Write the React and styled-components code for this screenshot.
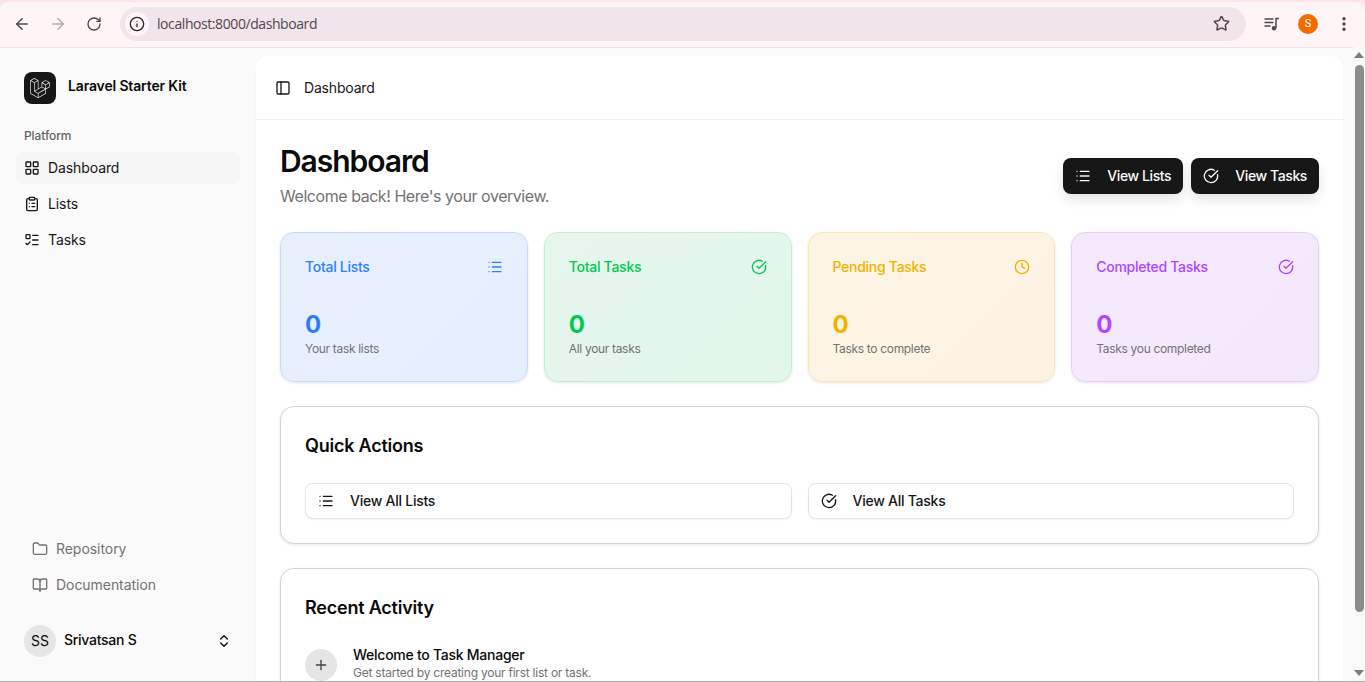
import React from 'react'
import styled, { createGlobalStyle } from 'styled-components'
import {
  ArrowLeft, ArrowRight, RotateCw, Info, Star, MoreVertical,
  LayoutGrid, ClipboardList, ListTodo, List, CircleCheckBig, Clock, Folder,
  BookOpen, ChevronsUpDown, PanelLeft, Plus,
} from 'lucide-react'
import { SiLaravel } from 'react-icons/si'

const tones = {
  blue: { text: '#2b7fff', border: '#c3d9fd', from: '#e8f0fe', to: '#e6effe' },
  green: { text: '#00c951', border: '#bdeecf', from: '#e5f7ed', to: '#e3f6ea' },
  yellow: { text: '#f0b100', border: '#f9e6b5', from: '#fdf5e4', to: '#fcf3e3' },
  purple: { text: '#ad46ff', border: '#e6ccfd', from: '#f5e9fe', to: '#f4e8fd' },
}

const GlobalStyle = createGlobalStyle`
  html, body { margin: 0; padding: 0; overflow: hidden; }
  * { box-sizing: border-box; }
  body { font-family: Inter, "Liberation Sans", sans-serif; color: #0a0a0a; }
`

const Screen = styled.div`
  width: 1365px;
  height: 682px;
  display: flex;
  flex-direction: column;
  overflow: hidden;
  background: #fafafa;
  border-bottom: 1px solid #a9a9a9;
`

const BrowserFrame = styled.div`
  flex: none;
  height: 48px;
  padding-top: 2px;
  background: #ffe3ea;
`

const Toolbar = styled.div`
  height: 46px;
  display: flex;
  align-items: center;
  padding: 0 3px 2px 4px;
  background: #fff5f6;
  border-radius: 8px 8px 0 0;
  border-bottom: 1px solid #f1dfe5;
`

const NavButton = styled.span`
  width: 36px;
  height: 36px;
  display: flex;
  align-items: center;
  justify-content: center;
  color: ${p => (p.$dim ? '#b5a9ae' : '#54454c')};
`

const AddressBar = styled.div`
  flex: 1;
  height: 34px;
  margin-left: 8px;
  padding: 0 16px 0 5px;
  display: flex;
  align-items: center;
  background: #f1e5ec;
  border-radius: 17px;
  color: #54454c;
`

const InfoBadge = styled.span`
  width: 24px;
  height: 24px;
  border-radius: 50%;
  background: #fff5f8;
  color: #2b2328;
  display: flex;
  align-items: center;
  justify-content: center;
`

const Url = styled.span`
  flex: 1;
  margin-left: 8px;
  font: 14px "Open Sans", sans-serif;
  letter-spacing: -0.42px;
`

const ChromeActions = styled.div`
  display: flex;
  align-items: center;
  margin-left: 8px;
  color: #54454c;
`

const ProfileBadge = styled.span`
  width: 20px;
  height: 20px;
  margin: 0 8px;
  border-radius: 50%;
  background: #f26d00;
  color: #fff;
  font: 11px Roboto, sans-serif;
  display: flex;
  align-items: center;
  justify-content: center;
`

const Workspace = styled.div`
  flex: 1;
  min-height: 0;
  display: flex;
`

const Sidebar = styled.aside`
  flex: none;
  width: 256px;
  display: flex;
  flex-direction: column;
  padding: 24px 16px 24px;
`

const Brand = styled.div`
  display: flex;
  align-items: center;
  gap: 12px;
  padding: 0 8px;
  height: 32px;
  margin-bottom: 24px;
`

const LogoTile = styled.span`
  width: 32px;
  height: 32px;
  border-radius: 8px;
  background: #171717;
  color: #fafafa;
  display: flex;
  align-items: center;
  justify-content: center;
`

const BrandName = styled.span`
  font-size: 14px;
  font-weight: 600;
  letter-spacing: -0.15px;
  margin-top: -5px;
`

const NavLabel = styled.div`
  font-size: 12px;
  font-weight: 500;
  color: #646464;
  padding: 0 8px;
  height: 16px;
  line-height: 16px;
  margin-bottom: 8px;
  letter-spacing: -0.1px;
`

const NavItem = styled.a`
  display: flex;
  align-items: center;
  gap: 8px;
  height: 32px;
  margin-bottom: 4px;
  padding: 0 8px;
  border-radius: 8px;
  font-size: 14px;
  letter-spacing: -0.1px;
  color: #171717;
  background: ${p => (p.$active ? '#f5f5f5' : 'transparent')};
`

const LinkText = styled.span`
  margin-top: -2px;
`

const SidebarFooter = styled.div`
  margin-top: auto;
  display: flex;
  flex-direction: column;
`

const FooterLink = styled.a`
  display: flex;
  align-items: center;
  gap: 8px;
  height: 32px;
  margin-bottom: 4px;
  padding: 0 16px;
  font-size: 14px;
  letter-spacing: -0.05px;
  color: #737373;
`

const UserRow = styled.div`
  display: flex;
  align-items: center;
  gap: 8px;
  height: 33px;
  margin-top: 19px;
  padding: 0 8px;
`

const Avatar = styled.span`
  width: 32px;
  height: 32px;
  border-radius: 50%;
  background: #e5e5e5;
  font-size: 14px;
  display: flex;
  align-items: center;
  justify-content: center;
`

const UserName = styled.span`
  flex: 1;
  font-size: 14px;
  font-weight: 500;
  letter-spacing: -0.27px;
  margin-top: -2px;
`

const ContentPanel = styled.main`
  flex: 1;
  min-width: 0;
  margin: 8px 10px 0 0;
  background: #fff;
  border-radius: 12px 12px 0 0;
  box-shadow: 0 1px 2px rgba(0, 0, 0, 0.05);
  overflow: hidden;
`

const PanelHeader = styled.header`
  height: 64px;
  display: flex;
  align-items: center;
  gap: 13px;
  padding: 0 19px;
  border-bottom: 1px solid #f0f0f0;
  font-size: 14px;
  letter-spacing: -0.18px;
  color: #171717;
`

const PanelBody = styled.div`
  padding: 24px;
  display: flex;
  flex-direction: column;
  gap: 24px;
`

const TitleRow = styled.div`
  display: flex;
  align-items: center;
  justify-content: space-between;
`

const PageTitle = styled.h1`
  margin: -1px 0 0;
  font-size: 30px;
  line-height: 36px;
  font-weight: 600;
  letter-spacing: -1.05px;
`

const PageSubtitle = styled.p`
  margin: 5px 0 0;
  font-size: 16px;
  line-height: 24px;
  letter-spacing: -0.45px;
  color: #737373;
`

const TitleActions = styled.div`
  display: flex;
  gap: 8px;
`

const DarkButton = styled.button`
  height: 36px;
  display: flex;
  align-items: center;
  gap: 16px;
  padding: 0 12px;
  border: 0;
  border-radius: 8px;
  background: #171717;
  color: #fafafa;
  font: 500 14px Inter, sans-serif;
  letter-spacing: -0.4px;
  box-shadow: 0 6px 12px rgba(0, 0, 0, 0.1);
`

const StatGrid = styled.div`
  display: grid;
  grid-template-columns: repeat(4, 1fr);
  gap: 16px;
`

const StatCard = styled.div`
  height: 150px;
  padding: 24px;
  border-radius: 14px;
  border: 1px solid ${p => tones[p.$tone].border};
  background: linear-gradient(135deg, ${p => tones[p.$tone].from}, ${p => tones[p.$tone].to});
  box-shadow: 0 1px 3px rgba(0, 0, 0, 0.1);
  color: ${p => tones[p.$tone].text};
`

const StatHead = styled.div`
  display: flex;
  align-items: center;
  justify-content: space-between;
  height: 20px;
  margin-bottom: 32px;
  font-size: 14px;
  font-weight: 500;
  letter-spacing: -0.28px;
`

const StatTitle = styled.span`
  margin-top: -2px;
`

const StatValue = styled.div`
  font-size: 24px;
  line-height: 32px;
  font-weight: 700;
`

const StatNote = styled.div`
  font-size: 12px;
  line-height: 16px;
  letter-spacing: -0.32px;
  color: #737373;
`

const Panel = styled.section`
  padding: 24px;
  border-radius: 14px;
  border: 1px solid #d4d4d4;
  background: #fff;
  box-shadow: 0 1px 3px rgba(0, 0, 0, 0.1);
`

const PanelTitle = styled.h2`
  margin: 0 0 23px;
  padding-top: 1px;
  font-size: 18px;
  line-height: 28px;
  font-weight: 600;
  letter-spacing: -0.22px;
`

const ActionGrid = styled.div`
  display: grid;
  grid-template-columns: 1fr 1fr;
  gap: 16px;
`

const ActionButton = styled.button`
  height: 36px;
  display: flex;
  align-items: center;
  gap: 16px;
  padding: 0 12px;
  border: 1px solid #e5e5e5;
  border-radius: 8px;
  background: #fff;
  color: #171717;
  font: 500 14px Inter, sans-serif;
  letter-spacing: -0.25px;
  box-shadow: 0 1px 2px rgba(0, 0, 0, 0.05);
`

const ActivityRow = styled.div`
  display: flex;
  gap: 16px;
`

const ActivityIcon = styled.span`
  flex: none;
  width: 32px;
  height: 32px;
  margin-top: 4px;
  border-radius: 50%;
  background: #e5e5e5;
  color: #404040;
  display: flex;
  align-items: center;
  justify-content: center;
`

const ActivityTitle = styled.div`
  font-size: 14px;
  line-height: 20px;
  font-weight: 500;
  letter-spacing: -0.26px;
`

const ActivityNote = styled.div`
  font-size: 12px;
  line-height: 16px;
  letter-spacing: -0.23px;
  color: #737373;
`

const ScrollTrack = styled.div`
  flex: none;
  width: 12px;
  margin-top: -1px;
  padding: 5px 1px 5px;
  display: flex;
  flex-direction: column;
  align-items: center;
  background: #f9f9f9;
`

const ScrollArrow = styled.span`
  flex: none;
  width: 0;
  height: 0;
  border-left: 5px solid transparent;
  border-right: 5px solid transparent;
  ${p => (p.$down ? 'border-top: 6px solid #7d7d7d;' : 'border-bottom: 6px solid #7d7d7d;')}
`

const ScrollThumb = styled.span`
  flex: none;
  width: 9px;
  height: 547px;
  margin-top: 7px;
  margin-bottom: auto;
  border-radius: 5px;
  background: #8c8c8c;
`

const MediaIcon = () => (
  <svg width="18" height="18" viewBox="0 0 18 18" fill="none" stroke="currentColor" strokeWidth="1.5">
    <path d="M1.5 4h9M1.5 7.5h9M1.5 11h6" />
    <path d="M13 13V3.5h3" />
    <circle cx="11" cy="13.2" r="2.2" fill="currentColor" stroke="none" />
  </svg>
)

const stats = [
  { tone: 'blue', title: 'Total Lists', Icon: List, note: 'Your task lists' },
  { tone: 'green', title: 'Total Tasks', Icon: CircleCheckBig, note: 'All your tasks' },
  { tone: 'yellow', title: 'Pending Tasks', Icon: Clock, note: 'Tasks to complete' },
  { tone: 'purple', title: 'Completed Tasks', Icon: CircleCheckBig, note: 'Tasks you completed' },
]

const App = () => (
  <Screen>
    <GlobalStyle />
    <BrowserFrame>
      <Toolbar>
        <NavButton><ArrowLeft size={18} /></NavButton>
        <NavButton $dim><ArrowRight size={18} /></NavButton>
        <NavButton><RotateCw size={16} /></NavButton>
        <AddressBar>
          <InfoBadge><Info size={16} /></InfoBadge>
          <Url>localhost:8000/dashboard</Url>
          <Star size={17} strokeWidth={2.2} />
        </AddressBar>
        <ChromeActions>
          <NavButton><MediaIcon /></NavButton>
          <ProfileBadge>S</ProfileBadge>
          <NavButton><MoreVertical size={18} strokeWidth={2.6} /></NavButton>
        </ChromeActions>
      </Toolbar>
    </BrowserFrame>
    <Workspace>
      <Sidebar>
        <Brand>
          <LogoTile><SiLaravel size={20} /></LogoTile>
          <BrandName>Laravel Starter Kit</BrandName>
        </Brand>
        <NavLabel>Platform</NavLabel>
        <NavItem $active><LayoutGrid size={16} /><LinkText>Dashboard</LinkText></NavItem>
        <NavItem><ClipboardList size={16} /><LinkText>Lists</LinkText></NavItem>
        <NavItem><ListTodo size={16} /><LinkText>Tasks</LinkText></NavItem>
        <SidebarFooter>
          <FooterLink><Folder size={16} /><LinkText>Repository</LinkText></FooterLink>
          <FooterLink><BookOpen size={16} /><LinkText>Documentation</LinkText></FooterLink>
          <UserRow>
            <Avatar>SS</Avatar>
            <UserName>Srivatsan S</UserName>
            <ChevronsUpDown size={16} />
          </UserRow>
        </SidebarFooter>
      </Sidebar>
      <ContentPanel>
        <PanelHeader>
          <PanelLeft size={16} />
          Dashboard
        </PanelHeader>
        <PanelBody>
          <TitleRow>
            <div>
              <PageTitle>Dashboard</PageTitle>
              <PageSubtitle>Welcome back! Here's your overview.</PageSubtitle>
            </div>
            <TitleActions>
              <DarkButton><List size={16} /><LinkText>View Lists</LinkText></DarkButton>
              <DarkButton><CircleCheckBig size={16} /><LinkText>View Tasks</LinkText></DarkButton>
            </TitleActions>
          </TitleRow>
          <StatGrid>
            {stats.map(({ tone, title, Icon, note }) => (
              <StatCard key={title} $tone={tone}>
                <StatHead><StatTitle>{title}</StatTitle><Icon size={16} /></StatHead>
                <StatValue>0</StatValue>
                <StatNote>{note}</StatNote>
              </StatCard>
            ))}
          </StatGrid>
          <Panel>
            <PanelTitle>Quick Actions</PanelTitle>
            <ActionGrid>
              <ActionButton><List size={16} /><LinkText>View All Lists</LinkText></ActionButton>
              <ActionButton><CircleCheckBig size={16} /><LinkText>View All Tasks</LinkText></ActionButton>
            </ActionGrid>
          </Panel>
          <Panel>
            <PanelTitle>Recent Activity</PanelTitle>
            <ActivityRow>
              <ActivityIcon><Plus size={16} /></ActivityIcon>
              <div>
                <ActivityTitle>Welcome to Task Manager</ActivityTitle>
                <ActivityNote>Get started by creating your first list or task.</ActivityNote>
              </div>
            </ActivityRow>
          </Panel>
        </PanelBody>
      </ContentPanel>
      <ScrollTrack>
        <ScrollArrow />
        <ScrollThumb />
        <ScrollArrow $down />
      </ScrollTrack>
    </Workspace>
  </Screen>
)

export default App
